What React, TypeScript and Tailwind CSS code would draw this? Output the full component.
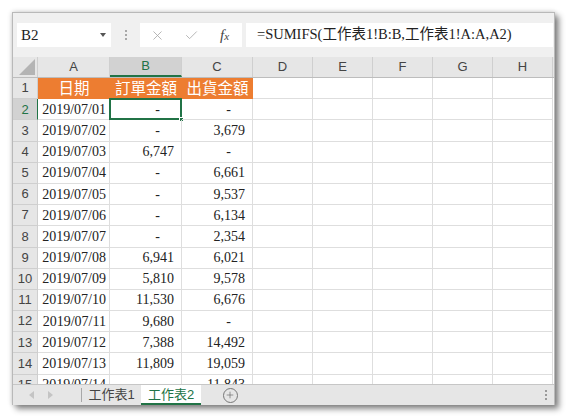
import { X, Check, Plus } from 'lucide-react'

const serif = "font-['Liberation_Serif','Noto_Sans_CJK_TC',serif]"
const sans = "font-['Liberation_Sans','Noto_Sans_CJK_TC',sans-serif]"

const cols = [
  { key: 'A', w: 'w-[72px]' },
  { key: 'B', w: 'w-[72px]' },
  { key: 'C', w: 'w-[71px]' },
  { key: 'D', w: 'w-[60px]' },
  { key: 'E', w: 'w-[60px]' },
  { key: 'F', w: 'w-[60px]' },
  { key: 'G', w: 'w-[60px]' },
  { key: 'H', w: 'w-[60px]' },
]

const rows: [string, string, string][] = [
  ['2019/07/01', '-', '-'],
  ['2019/07/02', '-', '3,679'],
  ['2019/07/03', '6,747', '-'],
  ['2019/07/04', '-', '6,661'],
  ['2019/07/05', '-', '9,537'],
  ['2019/07/06', '-', '6,134'],
  ['2019/07/07', '-', '2,354'],
  ['2019/07/08', '6,941', '6,021'],
  ['2019/07/09', '5,810', '9,578'],
  ['2019/07/10', '11,530', '6,676'],
  ['2019/07/11', '9,680', '-'],
  ['2019/07/12', '7,388', '14,492'],
  ['2019/07/13', '11,809', '19,059'],
  ['2019/07/14', '', '11,843'],
]

function NumCell({ v, w, selected }: { v: string; w: string; selected?: boolean }) {
  return (
    <div
      className={`${w} relative flex h-full shrink-0 items-center justify-end border-r border-b border-[#dedede] text-[14px] text-[#222] ${serif} ${
        v === '-' ? 'pr-[21px]' : 'pr-[7px]'
      }`}
    >
      {v}
      {selected && (
        <>
          <div className="absolute -top-px -left-px right-[-1px] bottom-[-1px] border-2 border-[#217346]" />
          <div className="absolute right-[-3px] bottom-[-3px] h-[5px] w-[5px] border border-white bg-[#217346]" />
        </>
      )}
    </div>
  )
}

export default function App() {
  return (
    <div className="h-[418px] w-[567px] overflow-hidden bg-white pt-[12px] pl-[12px]">
      <div className="flex h-[393px] w-[543px] flex-col border border-[#b9b9b9] bg-[#f0f0f0] shadow-[0_0_5px_rgba(0,0,0,0.2),4px_4px_6px_rgba(0,0,0,0.45)]">
        {/* formula bar */}
        <div className="flex h-[44px] shrink-0 items-start pt-[10px] pl-[4px] pr-[1px]">
          <div className={`flex h-[24px] w-[94px] items-center justify-between bg-white pl-[4px] pr-[5px] text-[15px] text-[#222] ${serif}`}>
            <span>B2</span>
            <svg width="6" height="4" viewBox="0 0 6 4">
              <polygon points="0,0 6,0 3,4" fill="#555" />
            </svg>
          </div>
          <div className="flex h-[24px] w-[29px] flex-col items-center justify-center gap-[2px]">
            <span className="h-[2px] w-[2px] bg-[#a8a8a8]" />
            <span className="h-[2px] w-[2px] bg-[#a8a8a8]" />
            <span className="h-[2px] w-[2px] bg-[#a8a8a8]" />
          </div>
          <div className="flex h-[24px] w-[102px] items-center bg-white">
            <X className="ml-[10px] h-[15px] w-[15px] text-[#a6a6a6]" strokeWidth={1.3} />
            <Check className="ml-[19px] h-[15px] w-[15px] text-[#a6a6a6]" strokeWidth={1.3} />
            <span className={`ml-[21px] text-[15px] text-[#444] italic ${serif}`}>
              f<span className="text-[11px]">x</span>
            </span>
          </div>
          <div className={`ml-[4px] flex h-[24px] flex-1 items-center bg-white pl-[11px] text-[14.5px] text-[#222] ${serif}`}>
            =SUMIFS(工作表1!B:B,工作表1!A:A,A2)
          </div>
        </div>

        {/* grid */}
        <div className="flex h-[327px] shrink-0 flex-col overflow-hidden bg-white">
          {/* column headers */}
          <div className={`flex h-[21px] shrink-0 border-b border-[#bdbdbd] bg-[#e6e6e6] text-[13px] text-[#444] ${sans}`}>
            <div className="relative w-[25px] shrink-0 border-r border-[#cfcfcf]">
              <svg className="absolute right-[2px] bottom-[2px]" width="16" height="16" viewBox="0 0 16 16">
                <polygon points="16,0 16,16 0,16" fill="#b4b4b4" />
              </svg>
            </div>
            {cols.map((c) =>
              c.key === 'B' ? (
                <div
                  key={c.key}
                  className={`${c.w} flex shrink-0 items-center justify-center border-r border-b-2 border-r-[#cfcfcf] border-b-[#217346] bg-[#d2d2d2] text-[#217346]`}
                >
                  {c.key}
                </div>
              ) : (
                <div key={c.key} className={`${c.w} flex shrink-0 items-center justify-center border-r border-[#cfcfcf]`}>
                  {c.key}
                </div>
              ),
            )}
          </div>

          {/* row 1 */}
          <div className="flex h-[21.2px] shrink-0">
            <div className={`flex w-[25px] shrink-0 items-center justify-center border-r border-b border-[#cfcfcf] bg-[#e6e6e6] text-[13px] text-[#444] ${sans}`}>
              1
            </div>
            <div className={`flex w-[215px] shrink-0 bg-[#ed7d31] text-[15.5px] text-white ${serif}`}>
              <div className="flex w-[72px] items-center justify-center">日期</div>
              <div className="flex w-[72px] items-center justify-center">訂單金額</div>
              <div className="flex w-[71px] items-center justify-center">出貨金額</div>
            </div>
            {cols.slice(3).map((c) => (
              <div key={c.key} className={`${c.w} shrink-0 border-r border-b border-[#dedede]`} />
            ))}
          </div>

          {rows.map((r, i) => {
            const n = i + 2
            const sel = n === 2
            return (
              <div key={n} className="flex h-[21.2px] shrink-0">
                <div
                  className={`flex w-[25px] shrink-0 items-center justify-center border-r border-b text-[13px] ${sans} ${
                    sel ? 'border-r-[#217346] border-b-[#cfcfcf] bg-[#d2d2d2] text-[#217346]' : 'border-[#cfcfcf] bg-[#e6e6e6] text-[#444]'
                  }`}
                >
                  {n}
                </div>
                <div className={`flex w-[72px] shrink-0 items-center justify-end border-r border-b border-[#dedede] pr-[3px] text-[14px] text-[#222] ${serif}`}>
                  {r[0]}
                </div>
                <NumCell v={r[1]} w="w-[72px]" selected={sel} />
                <NumCell v={r[2]} w="w-[71px]" />
                {cols.slice(3).map((c) => (
                  <div key={c.key} className={`${c.w} shrink-0 border-r border-b border-[#dedede]`} />
                ))}
              </div>
            )
          })}
        </div>

        {/* sheet tabs */}
        <div className={`flex h-[21px] shrink-0 items-stretch border-t border-[#c6c6c6] bg-[#e6e6e6] text-[13px] ${sans}`}>
          <div className="flex w-[68px] items-center gap-[14px] pl-[16px]">
            <svg width="5" height="8" viewBox="0 0 5 8">
              <polygon points="5,0 5,8 0,4" fill="#c4c4c4" />
            </svg>
            <svg width="5" height="8" viewBox="0 0 5 8">
              <polygon points="0,0 5,4 0,8" fill="#c4c4c4" />
            </svg>
          </div>
          <div className="my-[3px] w-px bg-[#a8a8a8]" />
          <div className="flex w-[59px] items-center justify-center text-[#444]">工作表1</div>
          <div className="flex w-[60px] items-center justify-center border-b-2 border-[#217346] bg-white pt-[2px] text-[#217346]">
            工作表2
          </div>
          <div className="flex w-[58px] items-center justify-center">
            <div className="flex h-[15px] w-[15px] items-center justify-center rounded-full border border-[#777]">
              <Plus className="h-[10px] w-[10px] text-[#666]" strokeWidth={1.6} />
            </div>
          </div>
          <div className="flex flex-1 flex-col items-end justify-center gap-[2px] pr-[7px]">
            <span className="h-[2px] w-[2px] bg-[#9a9a9a]" />
            <span className="h-[2px] w-[2px] bg-[#9a9a9a]" />
            <span className="h-[2px] w-[2px] bg-[#9a9a9a]" />
          </div>
        </div>
      </div>
    </div>
  )
}
